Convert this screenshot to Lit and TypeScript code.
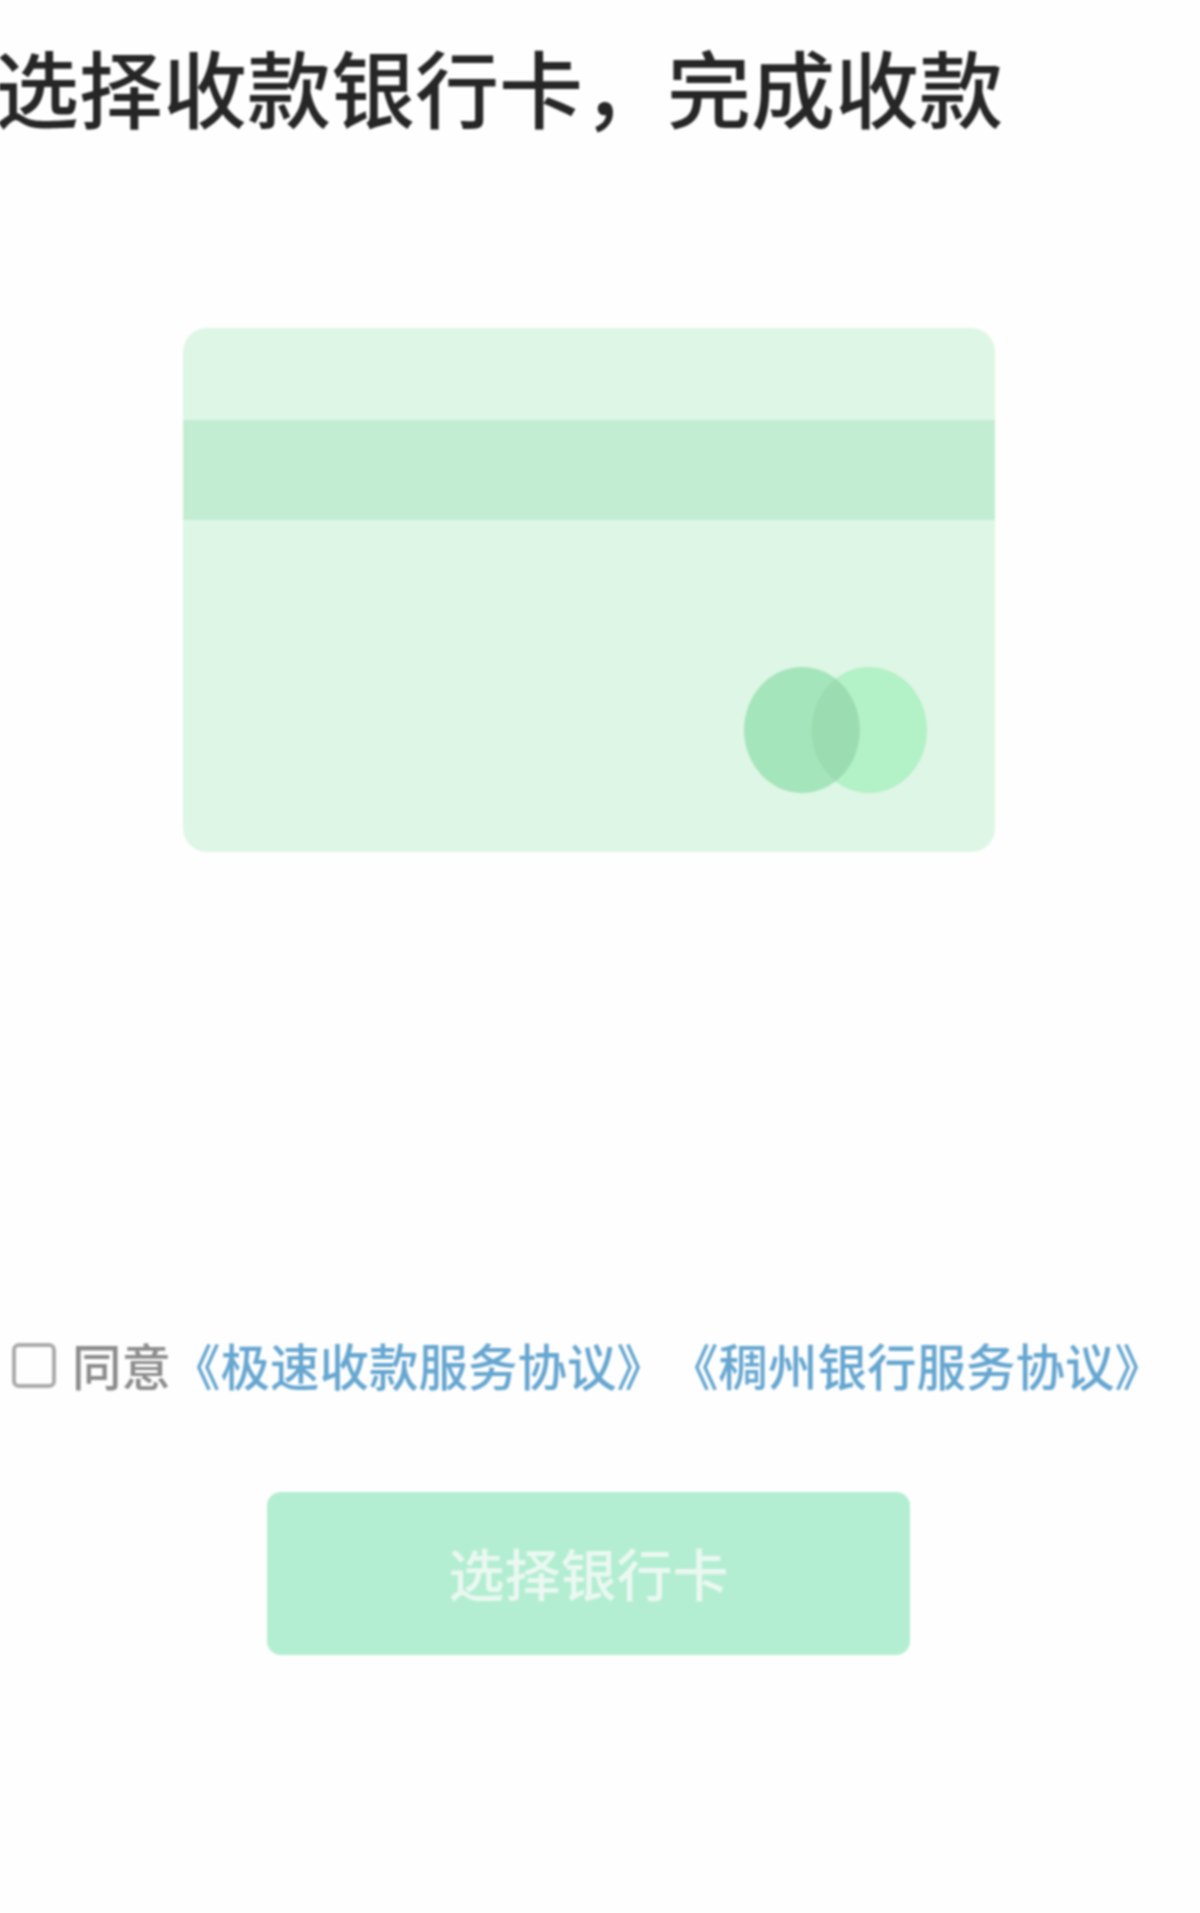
import { LitElement, html, css } from "lit";
import { customElement } from "lit/decorators.js";

@customElement("app-root")
export class AppRoot extends LitElement {
  static styles = css`
    :host {
      display: block;
      width: 1200px;
      height: 1913px;
      overflow: hidden;
      background: #fefefe;
      font-family: "Noto Sans CJK SC", "Noto Sans", sans-serif;
    }
    .page {
      display: flex;
      flex-direction: column;
      height: 100%;
      filter: blur(1px);
    }
    .title {
      margin: 32px 0 0 -5px;
      font-size: 84px;
      line-height: 108px;
      font-weight: 500;
      color: #262626;
      white-space: nowrap;
    }
    .card {
      box-sizing: border-box;
      align-self: flex-start;
      margin: 188px 0 0 183px;
      width: 812px;
      height: 524px;
      border-radius: 24px;
      background: #def6e5;
      display: flex;
      flex-direction: column;
      padding-top: 92px;
    }
    .stripe {
      height: 100px;
      background: #c3edd2;
    }
    .marks {
      display: block;
      align-self: flex-end;
      margin: 147px 68px 0 0;
    }
    .agree {
      display: flex;
      align-items: center;
      margin: 490px 0 0 12px;
      height: 46px;
      font-size: 49.5px;
      line-height: 44px;
      font-weight: 500;
      white-space: nowrap;
    }
    .box {
      box-sizing: border-box;
      flex: none;
      width: 44px;
      height: 45px;
      border: 4px solid #ababab;
      border-radius: 7px;
      margin-right: 16px;
    }
    .same {
      color: #8c8c8c;
    }
    .links {
      display: flex;
      color: #66a6d0;
    }
    .second {
      margin-left: 3px;
    }
    .button {
      align-self: flex-start;
      margin: 104px 0 0 267px;
      width: 643px;
      height: 163px;
      border-radius: 14px;
      background: #b3eed2;
      color: #eaf8f1;
      font-size: 56px;
      font-weight: 500;
      display: flex;
      align-items: center;
      justify-content: center;
      border: 0;
      padding: 0 0 4px;
      font-family: inherit;
    }
  `;

  render() {
    return html`
      <div class="page">
        <h1 class="title">选择收款银行卡，完成收款</h1>
        <div class="card">
          <div class="stripe"></div>
          <svg class="marks" width="183" height="126" viewBox="0 0 183 126">
            <ellipse cx="125" cy="63" rx="58" ry="63" fill="#b3f1c6"></ellipse>
            <ellipse cx="58" cy="63" rx="58" ry="63" fill="#a5e5bb"></ellipse>
            <path d="M91.5 12 A58 63 0 0 1 91.5 114 A58 63 0 0 1 91.5 12 Z" fill="#9bdcb0"></path>
          </svg>
        </div>
        <div class="agree">
          <span class="box"></span>
          <span class="same">同意</span>
          <span class="links">
            <span>《极速收款服务协议》</span>
            <span class="second">《稠州银行服务协议》</span>
          </span>
        </div>
        <button class="button">选择银行卡</button>
      </div>
    `;
  }
}
